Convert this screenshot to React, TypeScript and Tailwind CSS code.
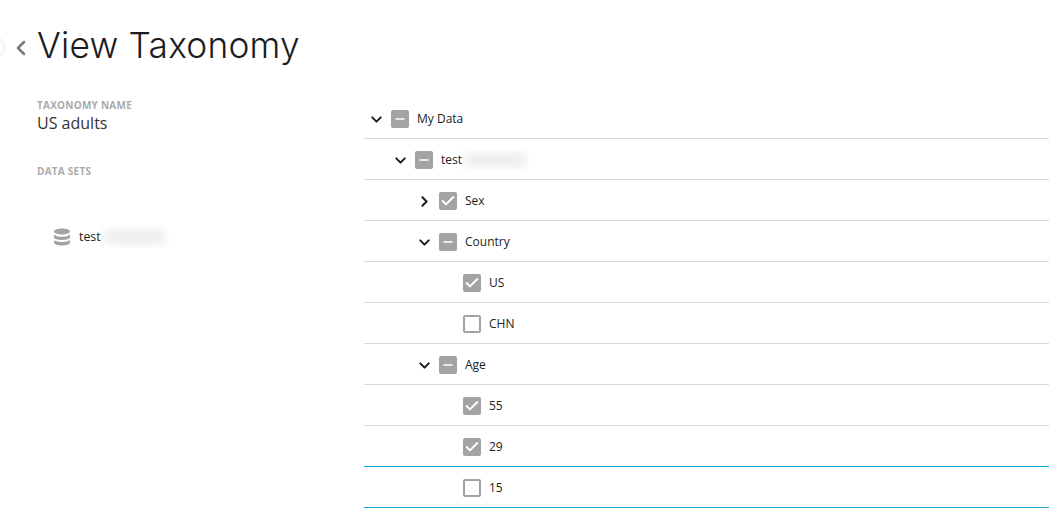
import { ChevronDown, ChevronRight, ChevronLeft, Check, Minus } from 'lucide-react';

type Row = {
  label: string;
  depth: number;
  state: 'checked' | 'mixed' | 'empty';
  toggle?: 'open' | 'closed';
  blurred?: boolean;
  line?: string;
};

const rows: Row[] = [
  { label: 'My Data', depth: 0, state: 'mixed', toggle: 'open' },
  { label: 'test', depth: 1, state: 'mixed', toggle: 'open', blurred: true },
  { label: 'Sex', depth: 2, state: 'checked', toggle: 'closed' },
  { label: 'Country', depth: 2, state: 'mixed', toggle: 'open' },
  { label: 'US', depth: 3, state: 'checked' },
  { label: 'CHN', depth: 3, state: 'empty' },
  { label: 'Age', depth: 2, state: 'mixed', toggle: 'open' },
  { label: '55', depth: 3, state: 'checked' },
  { label: '29', depth: 3, state: 'checked', line: 'border-[#00a8e0]' },
  { label: '15', depth: 3, state: 'empty', line: 'border-[#1b9fd0]' },
];

function Blur({ w }: { w: string }) {
  return (
    <span className={`${w} h-[22px] overflow-hidden bg-white flex items-center justify-center`}>
      <span className="block w-[90%] h-[14px] bg-[#ececec] blur-[5px]" />
    </span>
  );
}

function Box({ state }: { state: Row['state'] }) {
  if (state === 'empty') {
    return <span className="w-[18px] h-[18px] rounded-[2px] border-2 border-[#a3a3a3] bg-white" />;
  }
  return (
    <span className="w-[18px] h-[18px] rounded-[2px] bg-[#a3a3a3] flex items-center justify-center text-white">
      {state === 'checked' ? <Check size={16} strokeWidth={3} /> : <Minus size={14} strokeWidth={2.5} />}
    </span>
  );
}

function TreeRow({ row }: { row: Row }) {
  const pad = ['pl-[4px]', 'pl-[28px]', 'pl-[52px]', 'pl-[76px]'][row.depth];
  return (
    <div className={`h-[41px] flex items-center pt-[2px] border-b ${row.line ?? 'border-[#d9d9d9]'} ${pad}`}>
      <span className="w-[23px] h-[18px] flex items-center text-[#1a1a1a]">
        {row.toggle === 'open' && <ChevronDown size={17} strokeWidth={2.75} />}
        {row.toggle === 'closed' && <ChevronRight size={17} strokeWidth={2.75} />}
      </span>
      <Box state={row.state} />
      <span className="ml-[8px] text-[12px] text-[#222]">{row.label}</span>
      {row.blurred && <Blur w="w-[67px]" />}
    </div>
  );
}

export default function App() {
  return (
    <div className="relative w-[1049px] h-[514px] overflow-hidden bg-white font-['Open_Sans',sans-serif]">
      <span className="absolute left-[-15px] top-[38px] w-[18px] h-[18px] rounded-full bg-white shadow-[0_0_4px_rgba(0,0,0,0.15)]" />
      <div className="flex items-center h-[92px]">
        <span className="w-[37px] flex justify-end pr-[4px] pt-[4px] text-[#777]">
          <ChevronLeft size={24} strokeWidth={2.5} />
        </span>
        <h1 className="text-[35.3px] font-light text-[#1c1c1c] font-['Inter',sans-serif] leading-none tracking-[0.2px]">
          View Taxonomy
        </h1>
      </div>
      <div className="flex">
        <div className="w-[364px] pl-[37px] pt-[6px]">
          <div className="text-[10px] font-bold text-[#aaa] leading-[14px] tracking-[0.25px]">TAXONOMY NAME</div>
          <div className="text-[16px] text-[#333] leading-[22px]">US adults</div>
          <div className="mt-[30px] text-[10px] font-bold text-[#aaa] leading-[14px] tracking-[0.25px]">DATA SETS</div>
          <div className="mt-[48px] pl-[16px] flex items-center h-[22px]">
            <svg width="18" height="18" viewBox="0 0 18 18" fill="#a3a3a3" className="shrink-0">
              <path d="M1 3.500C1 1.600 5 .5 9 .5s8 1.100 8 3-4 3-8 3-8-1.100-8-3Z" />
              <path d="M1 6.500C2.500 8.300 5.700 8.800 9 8.800s6.500-.5 8-2.300v3C17 11 13 12 9 12s-8-1-8-2.500v-3Z" />
              <path d="M1 12c1.500 1.600 4.700 1.900 8 1.900s6.500-.3 8-1.900v2.500c0 1.900-4 3-8 3s-8-1.100-8-3V12Z" />
            </svg>
            <span className="ml-[8px] text-[12.3px] text-[#222]">test</span>
            <Blur w="w-[68px]" />
          </div>
        </div>
        <div className="flex-1 pt-[6px]">
          {rows.map((row, i) => (
            <TreeRow key={i} row={row} />
          ))}
        </div>
      </div>
    </div>
  );
}
